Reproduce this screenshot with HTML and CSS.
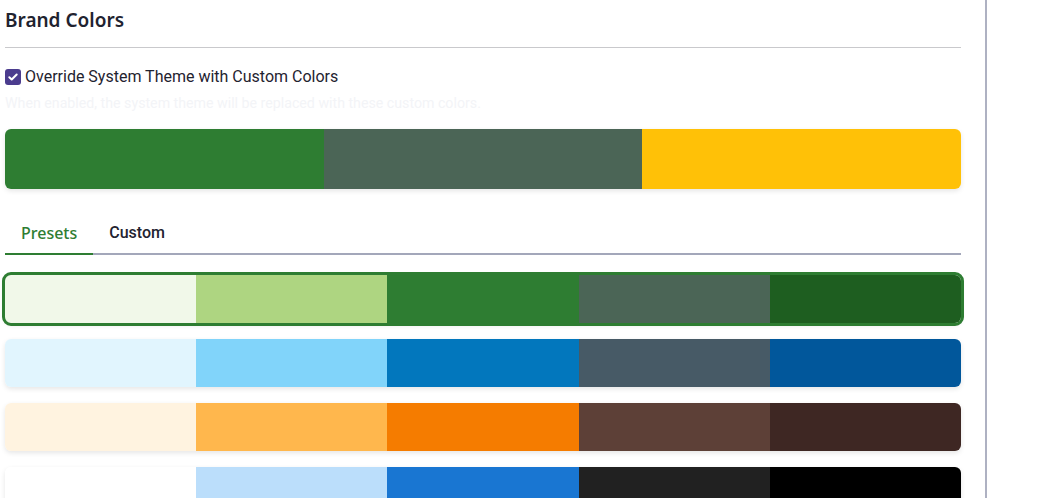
FILE: index.html
```html
<!DOCTYPE html>
<html lang="en">
<head>
<meta charset="utf-8">
<title>Brand Colors</title>
<link rel="stylesheet" href="styles.css">
</head>
<body>
<div class="panel">
  <div class="header">
    <h2 class="title">Brand Colors</h2>
  </div>
  <label class="check-row">
    <span class="checkbox">
      <svg viewBox="0 0 16 16" width="16" height="16"><path d="M4.3 8.2l2.4 2.3 5-5" fill="none" stroke="#fff" stroke-width="2" stroke-linecap="round" stroke-linejoin="round"/></svg>
    </span>
    <span class="check-label">Override System Theme with Custom Colors</span>
  </label>
  <p class="hint">When enabled, the system theme will be replaced with these custom colors.</p>

  <div class="preview">
    <div class="seg" style="background:#2e7d32"></div>
    <div class="seg" style="background:#4b6556"></div>
    <div class="seg" style="background:#ffc107"></div>
  </div>

  <div class="tabs">
    <div class="tab active">Presets</div>
    <div class="tab">Custom</div>
  </div>

  <div class="presets">
    <div class="palette selected">
      <div class="seg" style="background:#f1f8e9"></div>
      <div class="seg" style="background:#aed581"></div>
      <div class="seg" style="background:#2e7d32"></div>
      <div class="seg" style="background:#4b6556"></div>
      <div class="seg" style="background:#1e5e20"></div>
    </div>
    <div class="palette">
      <div class="seg" style="background:#e1f5fe"></div>
      <div class="seg" style="background:#81d4fa"></div>
      <div class="seg" style="background:#0277bd"></div>
      <div class="seg" style="background:#475a66"></div>
      <div class="seg" style="background:#01579b"></div>
    </div>
    <div class="palette">
      <div class="seg" style="background:#fff3e0"></div>
      <div class="seg" style="background:#ffb74d"></div>
      <div class="seg" style="background:#f57c00"></div>
      <div class="seg" style="background:#5d4037"></div>
      <div class="seg" style="background:#3e2723"></div>
    </div>
    <div class="palette">
      <div class="seg" style="background:#ffffff"></div>
      <div class="seg" style="background:#bbdefb"></div>
      <div class="seg" style="background:#1976d2"></div>
      <div class="seg" style="background:#212121"></div>
      <div class="seg" style="background:#000000"></div>
    </div>
  </div>
</div>
</body>
</html>
```

FILE: styles.css
```css
html, body {
  margin: 0;
  padding: 0;
  background: #ffffff;
  overflow: hidden;
}

body {
  font-family: "Noto Sans", "Open Sans", sans-serif;
  color: #1f2330;
}

.panel {
  width: 956px;
  padding: 6px 24px 40px 5px;
  border-right: 2px solid #aeb1c2;
  min-height: 498px;
  box-sizing: content-box;
}

.header {
  border-bottom: 1px solid #c9c9cc;
  padding-bottom: 13px;
}

.title {
  margin: 0;
  font-size: 19px;
  line-height: 28px;
  font-weight: 600;
  color: #1f2330;
}

.check-row {
  display: flex;
  align-items: center;
  gap: 4px;
  margin-top: 17px;
  height: 24px;
}

.checkbox {
  width: 16px;
  height: 16px;
  border-radius: 3px;
  background: #4b3c8e;
  display: flex;
  align-items: center;
  justify-content: center;
}

.checkbox svg {
  display: block;
}

.check-label {
  font-family: Roboto, "Noto Sans", sans-serif;
  font-size: 16px;
  line-height: 24px;
  color: #1f2330;
}

.hint {
  font-family: Roboto, "Noto Sans", sans-serif;
  margin: 4px 0 0;
  font-size: 14.2px;
  line-height: 20px;
  color: #f3f4f7;
}

.preview {
  display: flex;
  height: 60px;
  margin-top: 16px;
  border-radius: 6px;
  overflow: hidden;
  box-shadow: 0 2px 5px rgba(0, 0, 0, 0.1);
}

.seg {
  flex: 1 1 0;
}

.tabs {
  display: flex;
  margin-top: 20px;
  border-bottom: 2px solid #a3a7ba;
}

.tab {
  padding: 4px 16px 0;
  height: 40px;
  line-height: 40px;
  font-family: Roboto, "Noto Sans", sans-serif;
  font-size: 16px;
  font-weight: 500;
  color: #1f2330;
  margin-bottom: -2px;
  border-bottom: 2px solid transparent;
}

.tab.active {
  font-family: "Noto Sans", sans-serif;
  color: #2e7d32;
  font-weight: 500;
  border-bottom-color: #2e7d32;
}

.presets {
  display: flex;
  flex-direction: column;
  gap: 16px;
  margin-top: 20px;
}

.palette {
  display: flex;
  height: 48px;
  border-radius: 6px;
  overflow: hidden;
  box-shadow: 0 2px 5px rgba(0, 0, 0, 0.1);
}

.palette.selected {
  outline: 3px solid #2e7d32;
  outline-offset: 0;
}
```
